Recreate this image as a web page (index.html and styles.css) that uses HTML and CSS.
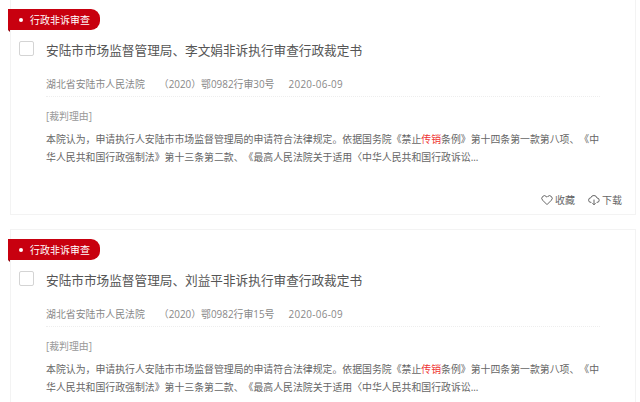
FILE: index.html
```html
<!DOCTYPE html>
<html lang="zh">
<head>
<meta charset="utf-8">
<title>裁判文书</title>
<link rel="stylesheet" href="styles.css">
</head>
<body>
<div class="list">
  <article class="card first">
    <div class="tag"><span class="dot"></span>行政非诉审查</div>
    <div class="head"><span class="check"></span><h2>安陆市市场监督管理局、李文娟非诉执行审查行政裁定书</h2></div>
    <div class="meta"><span>湖北省安陆市人民法院</span><span>（2020）鄂0982行审30号</span><span class="date">2020-06-09</span></div>
    <div class="label">[裁判理由]</div>
    <p class="text">本院认为，申请执行人安陆市市场监督管理局的申请符合法律规定。依据国务院《禁止<em>传销</em>条例》第十四条第一款第八项、《中华人民共和国行政强制法》第十三条第二款、《最高人民法院关于适用〈中华人民共和国行政诉讼...</p>
    <div class="actions">
      <span class="act"><svg viewBox="0 0 12 12" width="12" height="12"><path d="M6 10.6 1.6 6.2a2.6 2.6 0 0 1 0-3.7 2.6 2.6 0 0 1 3.7 0l.7.7.7-.7a2.6 2.6 0 0 1 3.7 3.7z" fill="none" stroke="#555" stroke-width=".9"/></svg>收藏</span>
      <span class="act"><svg viewBox="0 0 12 12" width="12" height="12"><path d="M3.4 8.4H3A2.3 2.3 0 0 1 2.8 3.8 3.2 3.2 0 0 1 9 4a2.2 2.2 0 0 1 0 4.4h-.4M6 5.6v5M4.4 9.2 6 10.8l1.6-1.6" fill="none" stroke="#555" stroke-width=".9"/></svg>下载</span>
    </div>
  </article>
  <article class="card">
    <div class="tag"><span class="dot"></span>行政非诉审查</div>
    <div class="head"><span class="check"></span><h2>安陆市市场监督管理局、刘益平非诉执行审查行政裁定书</h2></div>
    <div class="meta"><span>湖北省安陆市人民法院</span><span>（2020）鄂0982行审15号</span><span class="date">2020-06-09</span></div>
    <div class="label">[裁判理由]</div>
    <p class="text">本院认为，申请执行人安陆市市场监督管理局的申请符合法律规定。依据国务院《禁止<em>传销</em>条例》第十四条第一款第八项、《中华人民共和国行政强制法》第十三条第二款、《最高人民法院关于适用〈中华人民共和国行政诉讼...</p>
  </article>
</div>
</body>
</html>
```
FILE: styles.css
```css
html, body { margin: 0; padding: 0; background: #fff; }
body { width: 640px; height: 402px; overflow: hidden; font-family: "Open Sans", "Noto Sans CJK SC", "Liberation Sans", sans-serif; color: #666; text-spacing-trim: space-all; }
.list { display: flex; flex-direction: column; gap: 14px; padding: 0 4px 0 10px; height: 402px; overflow: hidden; }
.card { position: relative; flex: none; height: 203px; padding: 9px 35px 0 35px; border: 1px solid #f3f3f3; box-sizing: border-box; }
.card.first { height: 215px; border-top: 0; }
.tag { position: relative; display: flex; align-items: center; height: 21px; width: 92px; margin-left: -38px; background: #c8000f; border-radius: 0 9px 9px 0; color: #fff; font-size: 10px; box-sizing: border-box; padding-left: 11px; white-space: nowrap; }
.tag::after { content: ""; position: absolute; left: 0; top: 100%; border-top: 2px solid #8e0009; border-left: 2px solid transparent; }
.dot { width: 4px; height: 4px; border-radius: 50%; background: #fff; margin-right: 7px; }
.head { position: relative; margin-top: 8px; height: 22px; display: flex; align-items: center; }
.check { position: absolute; left: -27px; top: 3px; width: 13px; height: 13px; border: 1px solid #d4d4d4; border-radius: 2px; }
h2 { margin: 0; font-size: 12.65px; font-weight: 400; color: #555; white-space: nowrap; }
.meta { margin-top: 17px; height: 20px; display: flex; gap: 14px; font-size: 9.9px; line-height: 14px; color: #888; border-bottom: 1px dotted #eee; box-sizing: border-box; white-space: nowrap; }
.date { letter-spacing: .3px; }
.label { margin-top: 12px; font-size: 9.9px; line-height: 14px; color: #999; }
.text { margin: 7px 0 0; font-size: 9.9px; line-height: 18px; color: #666; }
em { font-style: normal; color: #e33; }
.actions { position: absolute; right: 13px; bottom: 7px; display: flex; gap: 13px; font-size: 10px; }
.act { display: flex; align-items: center; gap: 2px; }
```
